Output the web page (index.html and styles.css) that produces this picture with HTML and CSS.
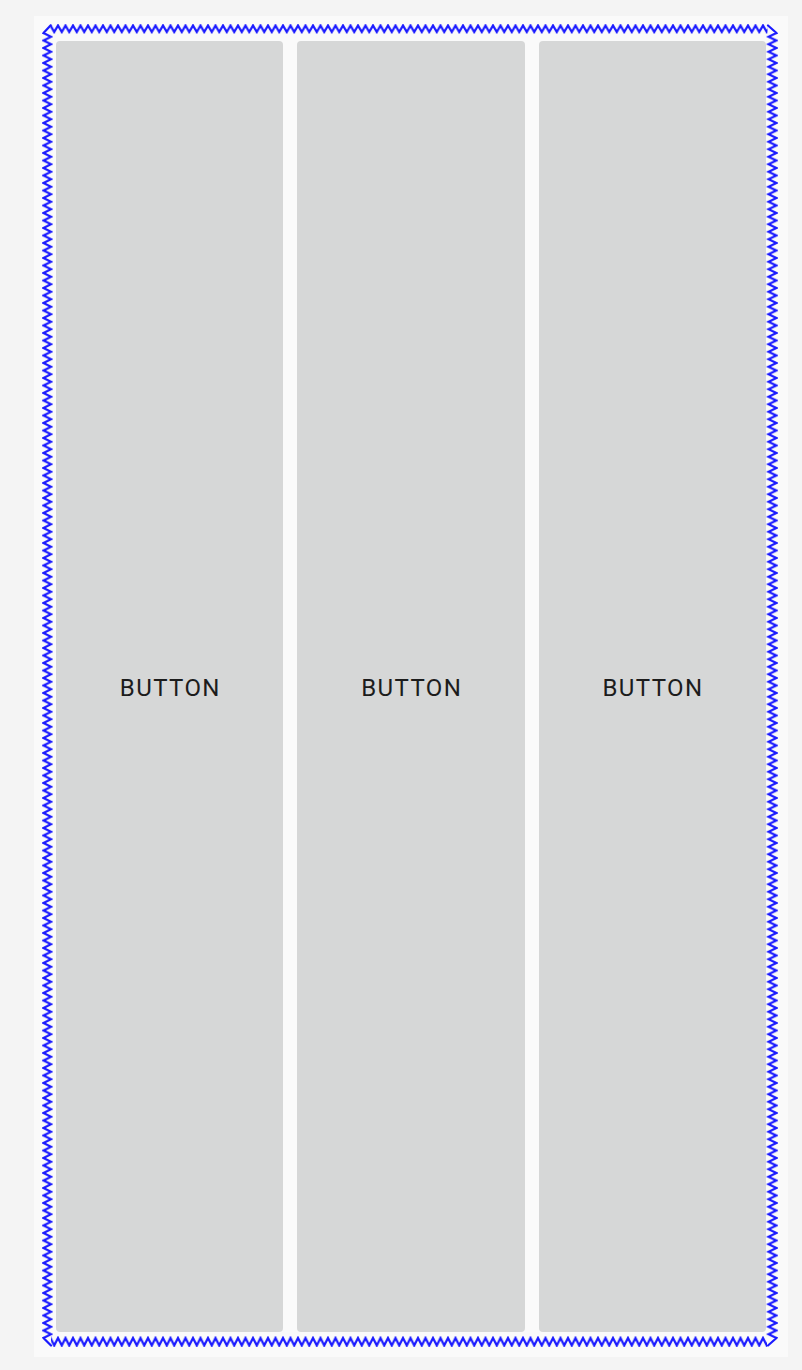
FILE: index.html
```html
<!DOCTYPE html>
<html>
<head>
<meta charset="utf-8">
<link rel="stylesheet" href="styles.css">
</head>
<body>
<div class="page">
  <div class="panel">
    <div class="frame">
      <svg class="zigzag" width="736" height="1323" viewBox="0 0 736 1323" xmlns="http://www.w3.org/2000/svg">
        <defs>
          <pattern id="zt" x="1" y="0" width="7.5" height="10" patternUnits="userSpaceOnUse">
            <path d="M-3.75,8 L0,1.5 L3.75,8 L7.5,1.5 L11.25,8" fill="none" stroke="#1a1aff" stroke-width="2.2"/>
          </pattern>
          <pattern id="zb" x="1" y="1312" width="7.5" height="11" patternUnits="userSpaceOnUse">
            <path d="M-3.75,9.5 L0,2 L3.75,9.5 L7.5,2 L11.25,9.5" fill="none" stroke="#1a1aff" stroke-width="2.2"/>
          </pattern>
          <pattern id="zl" x="0" y="9" width="11" height="7.5" patternUnits="userSpaceOnUse">
            <path d="M9,-3.75 L1.5,0 L9,3.75 L1.5,7.5 L9,11.25" fill="none" stroke="#1a1aff" stroke-width="2.2"/>
          </pattern>
          <pattern id="zr" x="724" y="9" width="12" height="7.5" patternUnits="userSpaceOnUse">
            <path d="M2.5,-3.75 L10.5,0 L2.5,3.75 L10.5,7.5 L2.5,11.25" fill="none" stroke="#1a1aff" stroke-width="2.2"/>
          </pattern>
        </defs>
        <rect x="8.5" y="0" width="717" height="10" fill="url(#zt)"/>
        <rect x="9" y="1312" width="716" height="11" fill="url(#zb)"/>
        <rect x="0" y="9" width="11" height="1305" fill="url(#zl)"/>
        <rect x="724" y="9" width="12" height="1305" fill="url(#zr)"/>
        <path d="M8.5,1.5 L1.5,9" fill="none" stroke="#1a1aff" stroke-width="2.2" stroke-linecap="round"/>
        <path d="M726,1.5 L734.5,9" fill="none" stroke="#1a1aff" stroke-width="2.2" stroke-linecap="round"/>
        <path d="M1.5,1314 L9,1321.5" fill="none" stroke="#1a1aff" stroke-width="2.2" stroke-linecap="round"/>
        <path d="M734.5,1314 L726,1321.5" fill="none" stroke="#1a1aff" stroke-width="2.2" stroke-linecap="round"/>
      </svg>
      <div class="row">
        <div class="btn">BUTTON</div>
        <div class="btn">BUTTON</div>
        <div class="btn">BUTTON</div>
      </div>
    </div>
  </div>
</div>
</body>
</html>
```
FILE: styles.css
```css
html, body {
  margin: 0;
  padding: 0;
  background: #f4f4f4;
}
.page {
  padding: 16px 14px 13px 34px;
}
.panel {
  background: #fafafa;
  padding: 8px 10px 10px 8px;
}
.frame {
  position: relative;
  padding: 17px 12px 15px 14px;
}
.zigzag {
  position: absolute;
  left: 0;
  top: 0;
  display: block;
  pointer-events: none;
}
.row {
  display: flex;
  gap: 14px;
  height: 1291px;
}
.btn {
  flex: 1;
  background: #d6d7d7;
  border-radius: 4px;
  display: flex;
  align-items: center;
  justify-content: center;
  font-family: Roboto, "Liberation Sans", sans-serif;
  font-weight: 400;
  font-size: 24px;
  letter-spacing: 1.4px;
  text-indent: 1.4px;
  color: #1c1c1c;
  padding-top: 3px;
}
```
